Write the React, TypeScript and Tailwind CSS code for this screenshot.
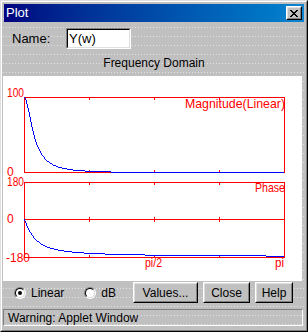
import React from 'react';

const RED = '#ff0000';
const BLUE = '#0000ff';

// pixel stepped curve, drawn like an old java drawLine plot
function stepRects(f: (x: number) => number, x0: number, x1: number) {
  const out: React.ReactElement[] = [];
  for (let x = x0; x < x1; x++) {
    const a = f(x);
    const b = f(x + 1);
    out.push(
      <rect key={x} x={x} y={Math.min(a, b)} width={1} height={Math.max(1, Math.abs(b - a))} fill={BLUE} />
    );
  }
  return out;
}

const magY = (x: number) => {
  const dx = (x - 24) / 10;
  return 172 - Math.floor(75 / (1 + dx * dx));
};

const phaseY = (x: number) => {
  const dx = (x - 24) / 10;
  return 219 + Math.floor((38 * 2 * Math.atan(dx)) / Math.PI);
};

function Plot() {
  const ticks = [89, 154, 219];
  return (
    <svg width={299} height={205} viewBox="3 76 299 205" shapeRendering="crispEdges" className="block">
      {/* magnitude frame */}
      <rect x={24} y={97} width={261} height={1} fill={RED} />
      <rect x={24} y={172} width={261} height={1} fill={RED} />
      <rect x={24} y={97} width={1} height={76} fill={RED} />
      <rect x={284} y={97} width={1} height={76} fill={RED} />
      {ticks.map((t) => (
        <g key={'m' + t}>
          <rect x={t} y={98} width={1} height={2} fill={RED} />
          <rect x={t} y={170} width={1} height={2} fill={RED} />
        </g>
      ))}

      {/* phase frame */}
      <rect x={24} y={182} width={261} height={1} fill={RED} />
      <rect x={24} y={219} width={261} height={1} fill={RED} />
      <rect x={24} y={257} width={261} height={1} fill={RED} />
      <rect x={24} y={182} width={1} height={76} fill={RED} />
      <rect x={284} y={182} width={1} height={76} fill={RED} />
      {ticks.map((t) => (
        <g key={'p' + t}>
          <rect x={t} y={183} width={1} height={2} fill={RED} />
          <rect x={t} y={217} width={1} height={5} fill={RED} />
          <rect x={t} y={255} width={1} height={2} fill={RED} />
        </g>
      ))}

      {stepRects(magY, 24, 284)}
      {stepRects(phaseY, 24, 284)}

      <g fill={RED} fontFamily="'Liberation Sans', Arial, sans-serif" fontSize={12} shapeRendering="auto">
        <text x={7} y={97} textLength={17} lengthAdjust="spacingAndGlyphs">100</text>
        <text x={7} y={176}>0</text>
        <text x={7} y={186} textLength={17} lengthAdjust="spacingAndGlyphs">180</text>
        <text x={7} y={223}>0</text>
        <text x={6} y={262} textLength={24} lengthAdjust="spacingAndGlyphs">-180</text>
        <text x={145} y={267} textLength={17} lengthAdjust="spacingAndGlyphs">pi/2</text>
        <text x={275} y={267} textLength={9} lengthAdjust="spacingAndGlyphs">pi</text>
        <text x={185} y={108} fontSize={13} textLength={100} lengthAdjust="spacingAndGlyphs">Magnitude(Linear)</text>
        <text x={255} y={192} fontSize={13} textLength={30} lengthAdjust="spacingAndGlyphs">Phase</text>
      </g>
    </svg>
  );
}

function Radio({ checked, label }: { checked: boolean; label: string }) {
  return (
    <div className="flex items-center gap-[5px]">
      <div className="w-[12px] h-[12px] rounded-full border border-t-[#808080] border-l-[#808080] border-r-white border-b-white">
        <div className="w-full h-full rounded-full bg-white border border-t-black border-l-black border-r-[#dfdfdf] border-b-[#dfdfdf] flex items-center justify-center">
          {checked && <div className="w-[4px] h-[4px] rounded-full bg-black" />}
        </div>
      </div>
      <span className="text-[12px] leading-[14px] text-black">{label}</span>
    </div>
  );
}

function Button({ label, width }: { label: string; width: string }) {
  return (
    <div className={`${width} h-[21px] border border-t-white border-l-white border-r-black border-b-black`}>
      <div className="h-full border border-t-[#dfdfdf] border-l-[#dfdfdf] border-r-[#808080] border-b-[#808080] bg-[#c0c0c0] flex items-center justify-center text-[12px] text-black">
        {label}
      </div>
    </div>
  );
}

export default function App() {
  return (
    <div className="w-[308px] h-[332px] border border-t-[#dfdfdf] border-l-[#dfdfdf] border-r-black border-b-black bg-[#c0c0c0] font-['Liberation_Sans',Arial,sans-serif] select-none">
      <div className="h-full border border-t-white border-l-white border-r-[#808080] border-b-[#808080] p-[2px] flex flex-col bg-[conic-gradient(at_1px_1px,transparent_270deg,#e2e2e2_0)] bg-[length:3px_9px] bg-[position:1px_7px]">
        {/* title bar */}
        <div className="h-[18px] shrink-0 flex items-center bg-gradient-to-r from-[#000080] to-[#1084d0] pl-[2px] pr-[2px]">
          <span className="text-white text-[13px] leading-[16px]">Plot</span>
          <div className="ml-auto w-[16px] h-[14px] border border-t-white border-l-white border-r-black border-b-black">
            <div className="h-full border border-t-[#dfdfdf] border-l-[#dfdfdf] border-r-[#808080] border-b-[#808080] bg-[#c0c0c0] flex items-center justify-center">
              <svg width={8} height={7} viewBox="0 0 8 7" shapeRendering="crispEdges">
                <path d="M0 0h2v1h-2z M6 0h2v1h-2z M1 1h2v1h-2z M5 1h2v1h-2z M2 2h4v1h-4z M3 3h2v1h-2z M2 4h4v1h-4z M1 5h2v1h-2z M5 5h2v1h-2z M0 6h2v1h-2z M6 6h2v1h-2z" fill="#000" />
              </svg>
            </div>
          </div>
        </div>

        {/* name row */}
        <div className="mt-[6px] h-[21px] flex items-center pl-[8px]">
          <span className="text-[13px] text-black w-[54px]">Name:</span>
          <div className="w-[65px] h-[21px] border border-t-[#808080] border-l-[#808080] border-r-white border-b-white">
            <div className="h-full bg-white border border-t-black border-l-black border-r-[#dfdfdf] border-b-[#dfdfdf] flex items-center pl-[1px] text-[13px] text-black">
              Y(w)
            </div>
          </div>
        </div>

        <div className="mt-[7px] h-[14px] text-center text-[12px] leading-[14px] text-black">Frequency Domain</div>

        {/* plot panel */}
        <div className="mt-[6px] -ml-px w-[299px] h-[205px] bg-white overflow-hidden">
          <Plot />
        </div>

        {/* controls */}
        <div className="mt-[1px] h-[21px] flex items-center pl-[10px]">
          <Radio checked label="Linear" />
          <div className="ml-[20px]">
            <Radio checked={false} label="dB" />
          </div>
          <div className="ml-auto mr-[11px] flex gap-[5px]">
            <Button label="Values..." width="w-[65px]" />
            <Button label="Close" width="w-[47px]" />
            <Button label="Help" width="w-[38px]" />
          </div>
        </div>

        {/* status */}
        <div className="mt-[6px] -ml-px w-[300px] h-[17px] border border-t-[#808080] border-l-[#808080] border-r-white border-b-white flex items-center pl-[4px] text-[12px] text-black">
          Warning: Applet Window
        </div>
      </div>
    </div>
  );
}
